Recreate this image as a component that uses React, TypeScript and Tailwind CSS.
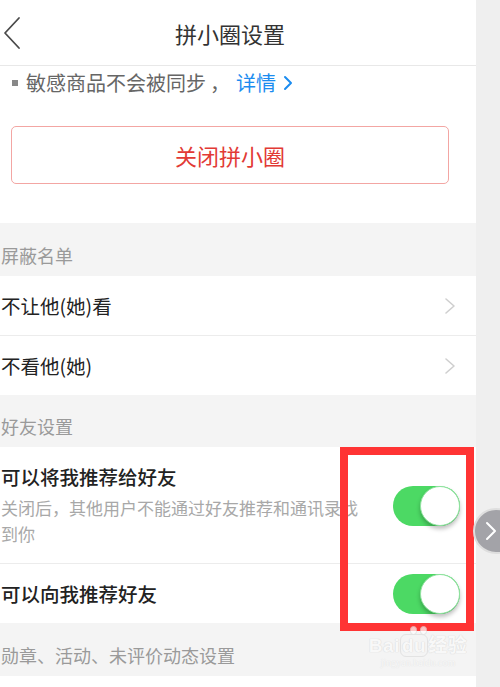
import React from 'react';

const font = { fontFamily: '"Noto Sans CJK SC", "Noto Sans", sans-serif' };

const Chevron: React.FC = () => (
  <svg width="14" height="18" viewBox="0 0 14 18" fill="none" className="shrink-0">
    <path d="M3 2 L11 9 L3 16" stroke="#cfcfcf" strokeWidth="1.6" strokeLinecap="round" strokeLinejoin="round" />
  </svg>
);

const Toggle: React.FC = () => (
  <div className="relative w-[67px] h-[40px] rounded-full bg-[#4cd964] shrink-0">
    <div className="absolute right-0 top-0 w-[40px] h-[40px] rounded-full bg-white border border-[#8fe39f] shadow-[0_3px_4px_rgba(0,0,0,0.25)]" />
  </div>
);

const SectionLabel: React.FC<{ text: string; h: string }> = ({ text, h }) => (
  <div className={`${h} flex items-end pl-[1px] pb-[12px] text-[18px] text-[#9a9a9a] leading-none`}>{text}</div>
);

const App: React.FC = () => {
  return (
    <div className="relative w-[500px] h-[687px] overflow-hidden flex bg-[#efefef]" style={font}>
      <div className="w-[476px] shrink-0 bg-[#f4f4f4] flex flex-col">
        {/* header */}
        <div className="h-[66px] bg-white border-b border-[#e8e8e8] relative flex items-center justify-center pr-[16px]">
          <svg width="22" height="34" viewBox="0 0 22 34" fill="none" className="absolute left-[1px] top-[16px]">
            <path d="M18 2 L4 17 L18 32" stroke="#4a4a4a" strokeWidth="1.8" strokeLinecap="round" strokeLinejoin="round" />
          </svg>
          <span className="text-[22px] text-[#333] leading-none">拼小圈设置</span>
        </div>

        {/* notice + close button */}
        <div className="bg-white h-[157px] flex flex-col">
          <div className="h-[34px] flex items-center text-[20px] leading-none text-[#666] pl-[12px]">
            <span className="w-[6px] h-[6px] bg-[#888] mr-[8px] inline-block" />
            <span>敏感商品不会被同步</span>
            <span className="ml-[4px] mr-[6px]">，</span>
            <span className="text-[#1b8cf0]">详情</span>
            <svg width="12" height="16" viewBox="0 0 12 16" fill="none" className="ml-[6px]">
              <path d="M3 2 L9 8 L3 14" stroke="#1b8cf0" strokeWidth="2" strokeLinecap="round" strokeLinejoin="round" />
            </svg>
          </div>
          <div className="mt-[26px] ml-[11px] w-[438px] h-[58px] border border-[#f3a6a3] rounded-[5px] flex items-center justify-center">
            <span className="text-[22px] text-[#e23a35] leading-none">关闭拼小圈</span>
          </div>
        </div>

        <SectionLabel text="屏蔽名单" h="h-[53px]" />
        <div className="bg-white">
          <div className="h-[60px] flex items-center justify-between pl-[1px] pr-[19px] border-b border-[#ececec]">
            <span className="text-[19.5px] text-[#222] leading-none">不让他(她)看</span>
            <Chevron />
          </div>
          <div className="h-[59px] flex items-center justify-between pl-[1px] pr-[19px]">
            <span className="text-[19.5px] text-[#222] leading-none">不看他(她)</span>
            <Chevron />
          </div>
        </div>

        <SectionLabel text="好友设置" h="h-[52px]" />
        <div className="bg-white">
          <div className="h-[117px] flex justify-between pl-[1px] pr-[16px] border-b border-[#ececec]">
            <div className="w-[370px] pt-[20px]">
              <div className="text-[19.5px] text-[#222] leading-none font-medium">可以将我推荐给好友</div>
              <div className="mt-[8px] text-[17px] text-[#a8a8a8] leading-[26px]">
                关闭后，其他用户不能通过好友推荐和通讯录找到你
              </div>
            </div>
            <div className="pt-[39px]">
              <Toggle />
            </div>
          </div>
          <div className="h-[59px] flex items-center justify-between pl-[1px] pr-[16px]">
            <span className="text-[19.5px] text-[#222] leading-none font-medium">可以向我推荐好友</span>
            <Toggle />
          </div>
        </div>

        <SectionLabel text="勋章、活动、未评价动态设置" h="h-[53px]" />
        <div className="bg-white flex-1" />
      </div>

      {/* annotation box */}
      <div className="absolute left-[340px] top-[447px] w-[134px] h-[184px] border-[8px] border-[#ff3434]" />

      {/* watermark */}
      <div className="absolute left-[366px] top-[626px] w-[104px] flex flex-col items-center pointer-events-none opacity-70">
        <div className="flex gap-[3px] h-[10px]">
          <span className="w-[7px] h-[9px] rounded-full bg-white border border-[#dcdcdc]" />
          <span className="w-[7px] h-[9px] rounded-full bg-white border border-[#dcdcdc]" />
        </div>
        <div
          className="text-[19px] font-bold leading-none text-[#fafafa] tracking-[0.5px]"
          style={{ fontFamily: '"Liberation Sans", "Noto Sans CJK SC", sans-serif', textShadow: '0 0 1px #cfcfcf, 0 0 1px #cfcfcf' }}
        >
          Bai<span className="border border-[#dcdcdc] rounded-[6px] px-[1px]">du</span>经验
        </div>
        <div
          className="text-[10px] leading-none mt-[3px] text-[#fafafa]"
          style={{ fontFamily: '"Liberation Serif", serif', textShadow: '0 0 1px #cfcfcf' }}
        >
          jingyan.baidu.com
        </div>
      </div>

      {/* side pager */}
      <div className="absolute left-[473px] top-[508px] w-[46px] h-[46px] rounded-full bg-[#a3a3a8] border-2 border-[#dedede] flex items-center pl-[10px]">
        <svg width="12" height="20" viewBox="0 0 12 20" fill="none">
          <path d="M2 2 L10 10 L2 18" stroke="#ffffff" strokeWidth="2" strokeLinecap="round" strokeLinejoin="round" />
        </svg>
      </div>
    </div>
  );
};

export default App;
